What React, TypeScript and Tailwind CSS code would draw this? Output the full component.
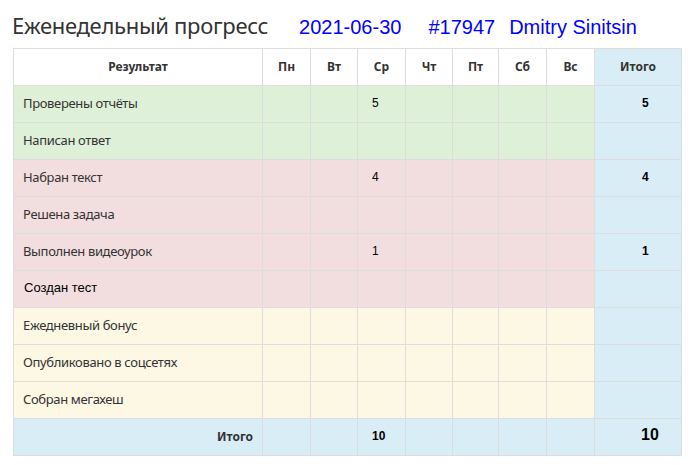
import React from "react";

type Row = { label: string; bg: string; wed?: string; total?: string; arial?: boolean };

const rows: Row[] = [
  { label: "Проверены отчёты", bg: "bg-[#dff0d8]", wed: "5", total: "5" },
  { label: "Написан ответ", bg: "bg-[#dff0d8]" },
  { label: "Набран текст", bg: "bg-[#f2dede]", wed: "4", total: "4" },
  { label: "Решена задача", bg: "bg-[#f2dede]" },
  { label: "Выполнен видеоурок", bg: "bg-[#f2dede]", wed: "1", total: "1" },
  { label: "Создан тест", bg: "bg-[#f2dede]", arial: true },
  { label: "Ежедневный бонус", bg: "bg-[#fcf8e3]" },
  { label: "Опубликовано в соцсетях", bg: "bg-[#fcf8e3]" },
  { label: "Собран мегахеш", bg: "bg-[#fcf8e3]" },
];

const days = ["Пн", "Вт", "Ср", "Чт", "Пт", "Сб", "Вс"];

export default function App() {
  return (
    <div className="w-[690px] h-[465px] bg-white overflow-hidden text-[#333]">
      <div className="h-[48px] flex items-baseline pl-[12px] pt-[8px]">
        <span className="text-[22px] leading-[34px] font-['Noto_Sans',sans-serif] tracking-[-0.3px]">
          Еженедельный прогресс
        </span>
        <span className="ml-[31px] text-[20px] text-[#0000ff] font-['Liberation_Sans',Arial,sans-serif]">2021-06-30</span>
        <span className="ml-[27px] text-[20px] text-[#0000ff] font-['Liberation_Sans',Arial,sans-serif]">#17947</span>
        <span className="ml-[14px] text-[20px] text-[#0000ff] font-['Liberation_Sans',Arial,sans-serif]">Dmitry Sinitsin</span>
      </div>
      <table className="ml-[13px] w-[668px] table-fixed border-collapse font-['Noto_Sans',sans-serif]">
        <colgroup>
          <col className="w-[249px]" />
          <col className="w-[48px]" />
          <col className="w-[47px]" />
          <col className="w-[48px]" />
          <col className="w-[47px]" />
          <col className="w-[46px]" />
          <col className="w-[48px]" />
          <col className="w-[48px]" />
          <col className="w-[87px]" />
        </colgroup>
        <thead>
          <tr className="h-[37px]">
            <th className="border border-[#ddd] text-[12px] font-bold text-center">Результат</th>
            {days.map((d) => (
              <th key={d} className="border border-[#ddd] text-[12px] font-bold text-center">
                {d}
              </th>
            ))}
            <th className="border border-[#ddd] bg-[#d9edf7] text-[12px] font-bold text-center">Итого</th>
          </tr>
        </thead>
        <tbody>
          {rows.map((r) => (
            <tr key={r.label} className={`h-[37px] ${r.bg}`}>
              <td
                className={`border border-[#ddd] pl-[9px] text-[13px] align-middle ${
                  r.arial
                    ? "font-['Liberation_Sans',Arial,sans-serif] text-black pl-[10px] pb-[3px]"
                    : "text-[#333] tracking-[-0.35px]"
                }`}
              >
                {r.label}
              </td>
              {days.map((d) => (
                <td
                  key={d}
                  className="border border-[#ddd] pl-[14px] pb-[3px] text-[12px] text-black font-['Liberation_Sans',Arial,sans-serif] align-middle"
                >
                  {d === "Ср" ? r.wed : ""}
                </td>
              ))}
              <td className="border border-[#ddd] bg-[#d9edf7] pl-[47px] pb-[3px] text-[12px] font-bold text-black font-['Liberation_Sans',Arial,sans-serif] align-middle">
                {r.total}
              </td>
            </tr>
          ))}
          <tr className="h-[37px] bg-[#d9edf7]">
            <td className="border border-[#ddd] pr-[9px] text-right text-[12px] font-bold text-[#333]">Итого</td>
            {days.map((d) => (
              <td
                key={d}
                className="border border-[#ddd] pl-[14px] pb-[2px] text-[12px] font-bold text-black font-['Liberation_Sans',Arial,sans-serif]"
              >
                {d === "Ср" ? "10" : ""}
              </td>
            ))}
            <td className="border border-[#ddd] pl-[46px] pb-[4px] text-[16px] font-bold text-black font-['Liberation_Sans',Arial,sans-serif]">
              10
            </td>
          </tr>
        </tbody>
      </table>
    </div>
  );
}
